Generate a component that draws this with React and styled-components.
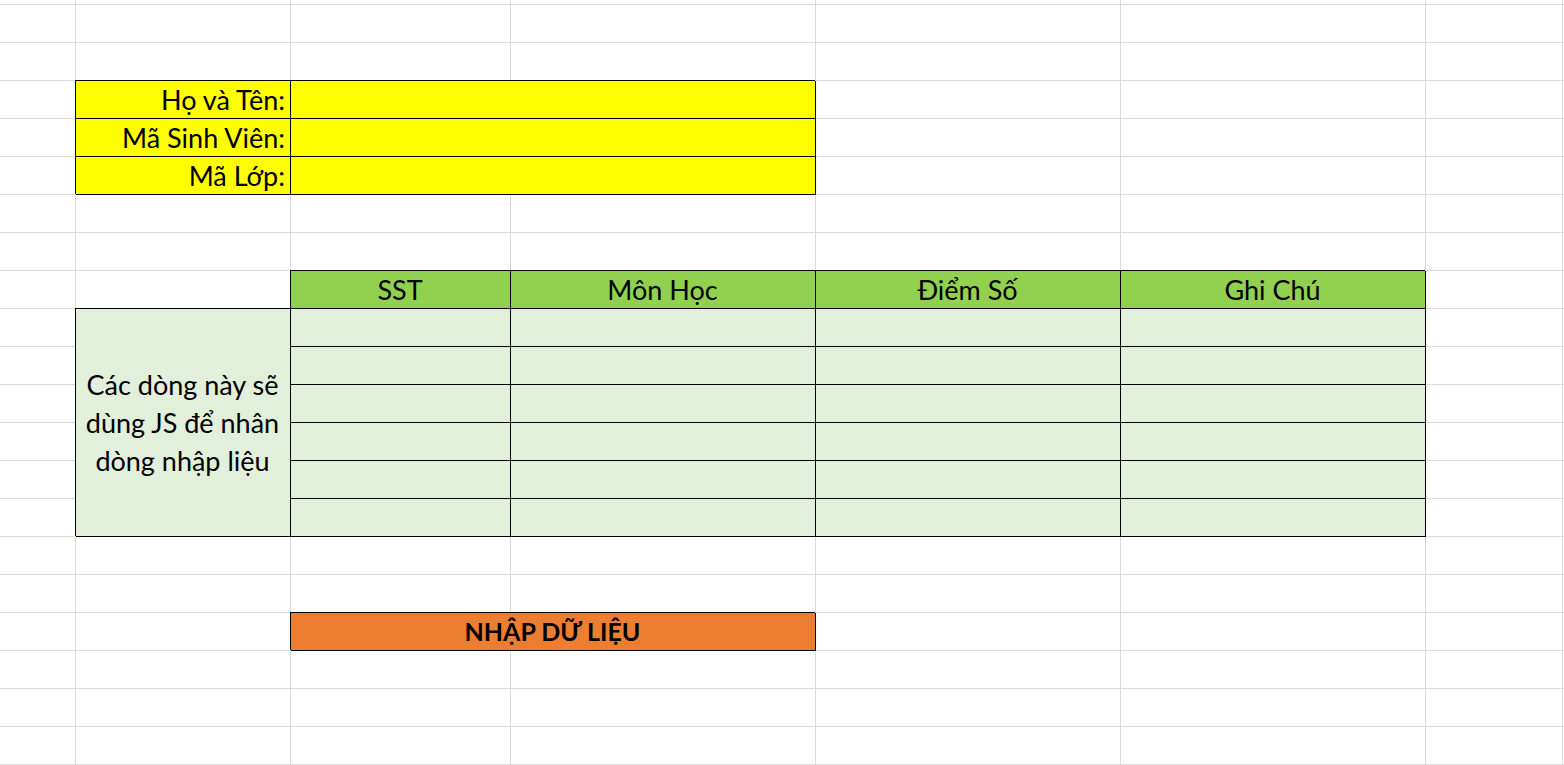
import React from "react";
import styled, { createGlobalStyle } from "styled-components";

const GlobalStyle = createGlobalStyle`
  html, body { margin: 0; padding: 0; background: #ffffff; overflow: hidden; }
  body { font-family: Lato, "Open Sans", sans-serif; }
`;

const COL_WIDTHS = [76, 215, 220, 305, 305, 305, 137];
const ROW_COUNT = 21;

const FILLS = {
  none: "#ffffff",
  yellow: "#ffff00",
  header: "#92d050",
  data: "#e2efda",
  button: "#ed7d31",
};

const Sheet = styled.div`
  display: grid;
  grid-template-columns: ${COL_WIDTHS.map((w) => `${w}px`).join(" ")} 1fr;
  grid-template-rows: 5px repeat(${ROW_COUNT - 1}, 38px);
  width: 1564px;
  height: 765px;
  overflow: hidden;
  background: #ffffff;
`;

const Cell = styled.div`
  box-sizing: border-box;
  grid-column: ${(p) => p.$col + 1} / span ${(p) => p.$colSpan};
  grid-row: ${(p) => p.$row + 1} / span ${(p) => p.$rowSpan};
  border-right: 1px solid ${(p) => (p.$framed ? "#000000" : "#dadada")};
  border-bottom: 1px solid ${(p) => (p.$framed ? "#000000" : "#dadada")};
  box-shadow: ${(p) => (p.$framed ? "-1px -1px 0 0 #000000" : "none")};
  background: ${(p) => FILLS[p.$fill]};
  display: flex;
  align-items: center;
  justify-content: ${(p) =>
    p.$align === "right" ? "flex-end" : p.$align === "center" ? "center" : "flex-start"};
  text-align: ${(p) => p.$align};
  padding: 0 5px 0 4px;
  font-family: Lato, "Open Sans", sans-serif;
  font-size: ${(p) => (p.$bold ? "25px" : "27px")};
  font-weight: ${(p) => (p.$bold ? 700 : 400)};
  line-height: 37px;
  color: #000000;
  white-space: nowrap;
  overflow: visible;
`;

const NoteText = styled.span`
  display: block;
  text-align: center;
  line-height: 38px;
  white-space: nowrap;
`;

const special = [
  { r: 3, c: 1, fill: "yellow", align: "right", text: "Họ và Tên:" },
  { r: 3, c: 2, cs: 2, fill: "yellow" },
  { r: 4, c: 1, fill: "yellow", align: "right", text: "Mã Sinh Viên:" },
  { r: 4, c: 2, cs: 2, fill: "yellow" },
  { r: 5, c: 1, fill: "yellow", align: "right", text: "Mã Lớp:" },
  { r: 5, c: 2, cs: 2, fill: "yellow" },
  { r: 8, c: 2, fill: "header", align: "center", text: "SST" },
  { r: 8, c: 3, fill: "header", align: "center", text: "Môn Học" },
  { r: 8, c: 4, fill: "header", align: "center", text: "Điểm Số" },
  { r: 8, c: 5, fill: "header", align: "center", text: "Ghi Chú" },
  {
    r: 9,
    c: 1,
    rs: 6,
    fill: "data",
    align: "center",
    note: ["Các dòng này sẽ", "dùng JS để nhân", "dòng nhập liệu"],
  },
  ...[9, 10, 11, 12, 13, 14].flatMap((r) =>
    [2, 3, 4, 5].map((c) => ({ r, c, fill: "data" }))
  ),
  { r: 17, c: 2, cs: 2, fill: "button", align: "center", bold: true, text: "NHẬP DỮ LIỆU" },
];

function buildCells() {
  const totalCols = COL_WIDTHS.length + 1;
  const taken = Array.from({ length: ROW_COUNT }, () => Array(totalCols).fill(null));
  special.forEach((s) => {
    const cs = s.cs || 1;
    const rs = s.rs || 1;
    for (let r = s.r; r < s.r + rs; r++)
      for (let c = s.c; c < s.c + cs; c++) taken[r][c] = true;
  });
  const blanks = [];
  for (let r = 0; r < ROW_COUNT; r++) {
    for (let c = 0; c < totalCols; c++) {
      if (taken[r][c]) continue;
      blanks.push({ key: `b-${r}-${c}`, r, c, cs: 1, rs: 1, fill: "none", framed: false });
    }
  }
  const framed = special.map((s) => ({
    key: `f-${s.r}-${s.c}`,
    r: s.r,
    c: s.c,
    cs: s.cs || 1,
    rs: s.rs || 1,
    fill: s.fill,
    framed: true,
    align: s.align || "left",
    bold: s.bold,
    text: s.text,
    note: s.note,
  }));
  // framed cells come last so their outer frame paints over the grey gridlines
  return [...blanks, ...framed];
}

export default function App() {
  const cells = buildCells();
  return (
    <>
      <GlobalStyle />
      <Sheet>
        {cells.map((cell) => (
          <Cell
            key={cell.key}
            $row={cell.r}
            $col={cell.c}
            $colSpan={cell.cs}
            $rowSpan={cell.rs}
            $fill={cell.fill}
            $framed={cell.framed}
            $align={cell.align || "left"}
            $bold={cell.bold}
          >
            {cell.note ? (
              <div>
                {cell.note.map((line) => (
                  <NoteText key={line}>{line}</NoteText>
                ))}
              </div>
            ) : (
              cell.text
            )}
          </Cell>
        ))}
      </Sheet>
    </>
  );
}
